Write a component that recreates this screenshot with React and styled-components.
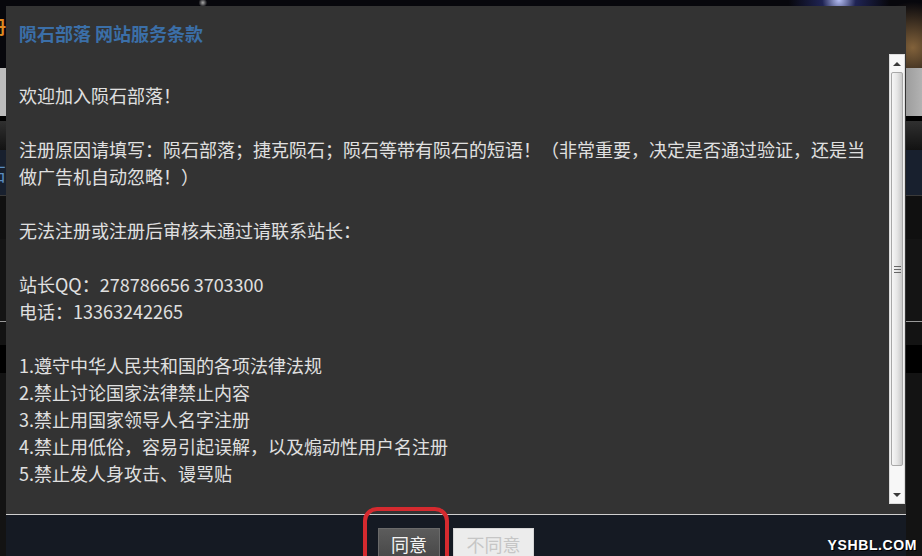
import React from "react"
import styled, { createGlobalStyle } from "styled-components"

const GlobalStyle = createGlobalStyle`
  html, body {
    margin: 0;
    padding: 0;
    background: #111;
  }
  * {
    box-sizing: border-box;
  }
`

const cjk = `"Noto Sans CJK SC", "Noto Sans", sans-serif`

const Page = styled.div`
  position: relative;
  width: 922px;
  height: 556px;
  overflow: hidden;
  font-family: ${cjk};
`

const Backdrop = styled.div`
  display: flex;
  flex-direction: column;
  height: 100%;
`

const StarBand = styled.div`
  height: 68px;
  padding: 14px 0 0 0;
  background:
    radial-gradient(circle at 91% 0%, rgba(190, 200, 255, 0.95) 0, rgba(60, 70, 170, 0.45) 2%, transparent 6%),
    radial-gradient(circle at 99% 70%, rgba(160, 120, 70, 0.8) 0, transparent 5%),
    radial-gradient(circle at 22% 4%, #aaa 0, transparent 0.6%),
    #07070c;
  color: #e08a20;
  font-weight: bold;
  font-size: 18px;
  line-height: 24px;
`

const ClippedWord = styled.span`
  display: inline-block;
  margin-left: -12px;
`

const GreyBand = styled.div`
  height: 48px;
  background: linear-gradient(90deg, #bcbcbc 0%, #bcbcbc 97%, #9a9a9a 98%, #b2b2b2 100%);
`

const BlackBand = styled.div`
  height: 5px;
  background: #000;
`

const FadeBand = styled.div`
  height: 29px;
  background: linear-gradient(#303030, #121212);
`

const NavBand = styled.div`
  height: 46px;
  background: #18202e;
  color: #5a8cc0;
  font-size: 18px;
  line-height: 46px;
  border-bottom: 1px solid #3a3a3a;
`

const DarkBand = styled.div`
  flex: 1;
  display: flex;
  flex-direction: column;
  background: #131313;
`

const Spacer = styled.div`
  height: ${(p) => p.h}px;
  background: ${(p) => p.bg || "transparent"};
  border-bottom: ${(p) => (p.line ? "1px solid #9a9a9a" : "none")};
`

const Modal = styled.div`
  position: absolute;
  top: 6px;
  left: 6px;
  width: 900px;
  bottom: -20px;
  display: flex;
  flex-direction: column;
  background: #333333;
`

const Header = styled.div`
  height: 48px;
  padding: 15px 13px 0;
`

const Title = styled.h3`
  margin: 0;
  font-size: 18px;
  line-height: 24px;
  font-weight: bold;
  color: #3b6fa8;
`

const ContentRow = styled.div`
  display: flex;
  height: 460px;
  padding-left: 13px;
  padding-right: 1px;
`

const Body = styled.div`
  width: 855px;
  padding-top: 28px;
  display: flex;
  flex-direction: column;
  gap: 27px;
  color: #e0e0e0;
  font-size: 18px;
  line-height: 27px;
`

const Para = styled.p`
  margin: 0;
`

const Scrollbar = styled.div`
  margin-left: auto;
  width: 16px;
  height: 450px;
  display: flex;
  flex-direction: column;
  background: #f2f2f2;
  border: 1px solid #dcdcdc;
`

const ArrowButton = styled.div`
  height: ${(p) => p.h}px;
  display: flex;
  justify-content: center;
  align-items: ${(p) => (p.down ? "flex-end" : "center")};
  padding-bottom: ${(p) => (p.down ? 6 : 0)}px;
  background: #f7f7f7;
`

const Arrow = styled.div`
  width: 0;
  height: 0;
  border-left: 4px solid transparent;
  border-right: 4px solid transparent;
  ${(p) =>
    p.down ? "border-top: 4px solid #3a3a3a;" : "border-bottom: 4px solid #3a3a3a;"}
`

const Thumb = styled.div`
  height: 394px;
  margin: 0 1px;
  display: flex;
  align-items: center;
  justify-content: center;
  border: 1px solid #a8a8a8;
  border-radius: 2px;
  background: linear-gradient(90deg, #f6f6f6 0%, #e6e6e6 50%, #c9c9c9 100%);
`

const Grip = styled.div`
  width: 7px;
  height: 7px;
  background: repeating-linear-gradient(#666 0 1px, transparent 1px 3px);
`

const Footer = styled.div`
  flex: 1;
  display: flex;
  justify-content: center;
  align-items: flex-start;
  gap: 13px;
  padding-top: 13px;
  background: #151a23;
  border-top: 1px solid #cfcfcf;
`

const Button = styled.button`
  height: 32px;
  width: ${(p) => p.w}px;
  padding: 0;
  font-family: ${cjk};
  font-size: 18px;
  line-height: 30px;
  border: 1px solid ${(p) => (p.disabled ? "#d6d6d6" : "#6a6a6a")};
  color: ${(p) => (p.disabled ? "#c6c6c6" : "#f4f4f4")};
  background: ${(p) =>
    p.disabled ? "#ececec" : "linear-gradient(#5c5c5c, #474747)"};
`

const Highlight = styled.div`
  position: absolute;
  left: 363px;
  top: 507px;
  width: 86px;
  height: 70px;
  border: 4px solid #d52a2f;
  border-radius: 14px;
  pointer-events: none;
`

const Watermark = styled.div`
  position: absolute;
  right: 5px;
  bottom: 3px;
  font-family: "Liberation Sans", Arial, sans-serif;
  font-weight: bold;
  font-size: 14px;
  line-height: 16px;
  letter-spacing: 0.6px;
  color: #ffffff;
  text-shadow: 1px 1px 0 #000;
`

const rules = [
  "1.遵守中华人民共和国的各项法律法规",
  "2.禁止讨论国家法律禁止内容",
  "3.禁止用国家领导人名字注册",
  "4.禁止用低俗，容易引起误解，以及煽动性用户名注册",
  "5.禁止发人身攻击、谩骂贴",
]

const App = () => (
  <Page>
    <GlobalStyle />
    <Backdrop>
      <StarBand>
        <ClippedWord>册</ClippedWord>
      </StarBand>
      <GreyBand />
      <BlackBand />
      <FadeBand />
      <NavBand>
        <ClippedWord>石</ClippedWord>
      </NavBand>
      <DarkBand>
        <Spacer h={43} bg="#101010" />
        <Spacer h={83} bg="#141414" line />
        <Spacer h={23} />
        <Spacer h={28} bg="#000" />
      </DarkBand>
    </Backdrop>

    <Modal>
      <Header>
        <Title>陨石部落 网站服务条款</Title>
      </Header>
      <ContentRow>
        <Body>
          <Para>欢迎加入陨石部落！</Para>
          <Para>
            注册原因请填写：陨石部落；捷克陨石；陨石等带有陨石的短语！（非常重要，决定是否通过验证，还是当做广告机自动忽略！）
          </Para>
          <Para>无法注册或注册后审核未通过请联系站长：</Para>
          <Para>
            站长QQ：278786656 3703300
            <br />
            电话：13363242265
          </Para>
          <Para>
            {rules.map((r, i) => (
              <React.Fragment key={i}>
                {r}
                {i < rules.length - 1 && <br />}
              </React.Fragment>
            ))}
          </Para>
        </Body>
        <Scrollbar>
          <ArrowButton h={17}>
            <Arrow />
          </ArrowButton>
          <Thumb>
            <Grip />
          </Thumb>
          <ArrowButton h={37} down>
            <Arrow down />
          </ArrowButton>
        </Scrollbar>
      </ContentRow>
      <Footer>
        <Button w={62}>同意</Button>
        <Button w={81} disabled>
          不同意
        </Button>
      </Footer>
    </Modal>

    <Highlight />
    <Watermark>YSHBL.COM</Watermark>
  </Page>
)

export default App
